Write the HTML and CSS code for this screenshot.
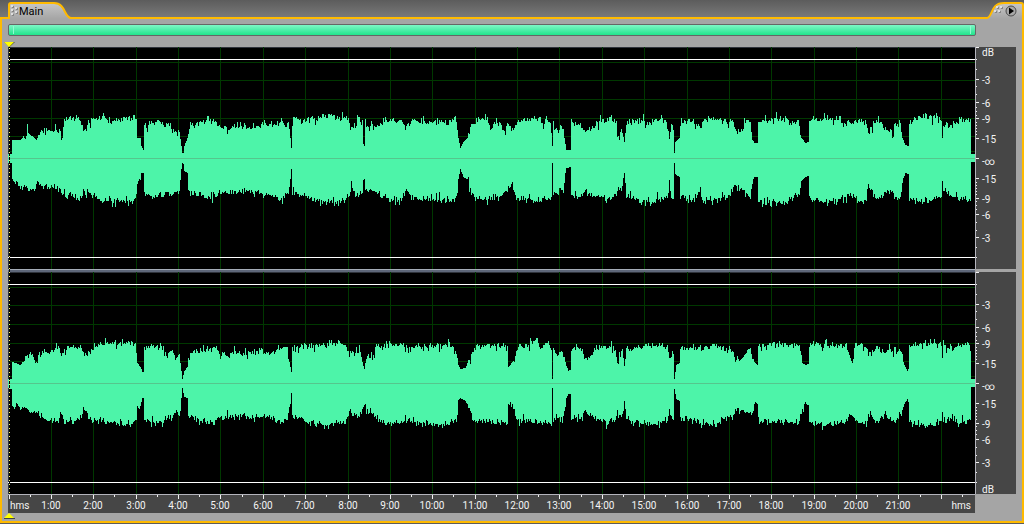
FILE: index.html
```
<!DOCTYPE html>
<html lang="en">
<head>
    <meta charset="UTF-8">
    <meta name="viewport" content="width=device-width, initial-scale=1.0">
    <title>Main</title>
    <link rel="stylesheet" href="styles.css">
</head>
<body>
    <header class="tab-bar">
        <button class="tab" type="button">
            <svg class="tab-shape" width="74" height="19" viewBox="0 0 74 19" aria-hidden="true">
                <defs>
                    <linearGradient id="tabFill" x1="0" y1="0" x2="0" y2="1">
                        <stop offset="0" stop-color="#c6c6c6"/>
                        <stop offset="1" stop-color="#a5a5a5"/>
                    </linearGradient>
                </defs>
                <path d="M0 19V18H9V5Q9 3 11 3H54C66 3 64 18 71 18H74V19Z" fill="url(#tabFill)"/>
                <path d="M0 18H9V5Q9 3 11 3H54C66 3 64 18 71 18H74" fill="none" stroke="#ffba00" stroke-width="2"/>
                <g fill="#858585">
                    <path d="M12 6h2v2h-2zM12 10h2v2h-2zM12 14h2v2h-2zM16 8h2v2h-2zM16 12h2v2h-2z"/>
                </g>
                <g fill="#dedede">
                    <path d="M11 5h2v2h-2zM11 9h2v2h-2zM11 13h2v2h-2zM15 7h2v2h-2zM15 11h2v2h-2z"/>
                </g>
            </svg>
            <span class="tab-label">Main</span>
        </button>
        <div class="tab-line"></div>
        <button class="panel-menu" type="button" aria-label="Panel menu">
            <svg width="40" height="19" viewBox="0 0 40 19">
                <path d="M0 19V18H3C9 17 6 3 20 3H37Q39 3 39 5V19Z" fill="url(#tabFill)"/>
                <path d="M0 18H3C9 17 6 3 20 3H37Q39 3 39 5V19" fill="none" stroke="#ffba00" stroke-width="2"/>
                <path d="M11 11h2v2h-2zM15 11h2v2h-2zM13 7h2v2h-2zM17 7h2v2h-2z" fill="#858585"/>
                <path d="M10 10h2v2h-2zM14 10h2v2h-2zM12 6h2v2h-2zM16 6h2v2h-2z" fill="#dedede"/>
                <circle cx="27" cy="11" r="5" fill="#a8a8a8" stroke="#4c4c4c"/>
                <path d="M25 7.500L30 11L25 14.500Z" fill="#000"/>
            </svg>
        </button>
    </header>

    <main class="panel">
        <div class="overview"><div class="overview-range"></div></div>

        <div class="editor">
            <div class="lane"><svg id="left"></svg></div>
            <div class="ruler db-ruler"><svg id="leftDb"></svg></div>
            <div class="splitter"></div>
            <div class="splitter-end"></div>
            <div class="lane"><svg id="right"></svg></div>
            <div class="ruler db-ruler"><svg id="rightDb"></svg></div>
            <div class="ruler time-ruler"><svg id="time"></svg></div>
            <div class="playhead">
                <svg class="marker marker-top" width="11" height="5" viewBox="0 0 11 5"><path d="M0 0H11L5.500 5Z" fill="#444"/><path d="M0 0H10L5 5Z" fill="#ff0"/></svg>
                <svg class="marker marker-bottom" width="11" height="6" viewBox="0 0 11 6"><path d="M0 5H11V6H0Z" fill="#444"/><path d="M5 0L10 5H0Z" fill="#ff0"/></svg>
            </div>
        </div>
    </main>

    <script>
        const START = 8, WIDTH = 967, HEIGHT = 222, MID = 111;
        const MINUTE = 42.38;

        // Envelope points: x, level above the centre line, level below it
        const leftEnvelope = `
            9,4,4 11,4,4 12,18,22 20,18,27 26,25,28 27,31,30 28,25,30 36,18,27 40,27,26 50,27,28 60,28,30 62,20,34
            64,36,37 70,41,37 79,40,41 84,27,32 88,36,33 95,38,38 103,42,42 110,36,42 120,39,42 134,41,41
            136,38,39 137,20,23 140,20,24 141,12,14 143,8,14 144,34,35 150,34,37 158,38,37 164,32,36
            168,36,34 172,28,34 179,26,32 181,12,10 182,5,4 183,5,5 184,12,12 187,20,14 188,26,30 190,32,33
            198,35,36 212,38,37 222,30,34 238,32,33 250,30,32 262,34,35 272,32,35 280,37,40 288,35,34
            290,20,20 291,10,10 292,34,34 294,40,35 302,37,36 310,41,38 316,37,42 320,42,42 336,41,44
            348,40,40 351,29,28 356,32,36 357,44,36 358,40,36 362,36,34 363,14,22 364,12,20 365,34,33
            372,30,31 380,33,38 385,38,40 396,37,41 402,37,41 406,30,32 410,36,38 425,36,40 438,35,40
            450,36,42 455,40,40 457,28,34 458,20,20 460,10,10 463,16,18 467,20,20 470,30,31 474,37,37
            485,40,42 490,31,38 500,35,37 503,26,34 508,35,29 512,26,25 515,34,37 522,38,40 533,40,42
            540,38,41 543,31,40 546,40,39 550,38,38 551,25,36 552,12,4 553,33,36 557,26,34 560,32,31
            563,26,30 565,14,14 566,8,9 570,8,8 571,36,36 580,33,37 585,26,31 590,30,36 600,36,38
            610,40,41 616,35,37 617,21,30 621,30,30 624,16,14 626,34,35 635,37,40 650,36,42 664,40,40
            668,28,36 669,22,27 671,34,36 673,28,45 674,5,4 675,16,15 679,20,18 680,36,38 690,38,41
            700,32,32 702,35,40 712,40,42 725,37,38 732,38,33 735,27,26 743,28,32 744,38,34 750,36,37
            752,18,22 754,15,18 757,15,18 758,37,42 770,38,44 785,40,43 791,34,40 798,36,37 800,28,28
            801,20,22 805,15,18 808,16,17 809,38,41 820,38,43 830,40,43 840,40,40 843,32,39 850,36,35
            858,38,41 866,35,42 868,27,23 870,28,30 875,37,38 880,38,37 884,30,34 890,27,32 893,22,33
            894,34,40 900,34,38 902,20,22 905,13,14 908,12,15 909,37,41 920,40,42 930,41,43 941,38,38
            942,20,23 943,33,34 954,33,37 960,39,42 970,37,39 971,4,3 975,4,3`;
        const rightEnvelope = `
            9,4,4 11,4,5 12,21,23 20,18,22 26,26,24 30,30,28 37,20,29 38,29,30 48,32,35 58,34,37 61,29,27
            63,29,37 65,34,38 80,36,36 84,28,26 88,30,34 95,35,36 103,39,37 112,40,38 128,39,41 135,38,38
            137,20,24 140,16,22 142,11,14 143,11,14 144,34,37 155,37,39 163,34,36 164,25,35 172,33,33
            175,24,27 179,27,33 181,12,14 182,4,4 184,12,13 187,16,14 188,26,33 193,31,34 205,33,37
            213,36,38 220,29,33 230,31,33 245,29,33 260,33,32 270,29,34 280,36,38 287,36,36 288,25,32
            290,16,20 291,11,9 292,34,33 300,37,35 315,37,40 330,40,41 345,38,38 349,29,28 360,30,32
            363,17,24 364,14,22 366,26,28 374,29,31 376,36,36 390,39,40 404,37,38 405,26,34 406,36,37
            425,36,40 452,38,38 456,32,38 458,18,16 460,14,14 465,15,17 468,22,22 472,28,33 475,37,36
            490,37,39 507,37,38 508,16,20 514,23,26 517,35,36 527,37,37 536,43,38 541,34,39 545,40,39
            551,34,39 552,4,4 553,37,39 556,28,33 560,33,36 564,27,30 566,17,14 568,12,10 570,13,10
            571,30,34 575,36,35 582,34,33 584,26,29 591,26,30 594,34,34 605,37,38 615,34,36 617,20,28
            622,32,33 624,17,17 626,33,35 640,37,41 655,38,40 667,36,37 669,24,27 673,34,36 674,4,5
            676,18,15 679,20,17 680,34,36 690,37,35 700,34,38 715,38,41 725,33,33 733,30,31 735,23,26
            743,25,26 750,36,28 752,24,30 755,20,18 757,18,20 758,37,38 770,39,38 790,38,39 799,38,38
            802,20,24 805,18,18 808,19,23 809,39,38 825,38,41 845,38,37 852,20,28 855,40,37 865,36,38
            870,28,29 876,38,40 884,30,32 895,34,38 901,30,32 904,18,20 907,12,15 908,14,18 909,37,38
            925,39,42 941,38,38 942,22,22 943,38,38 952,32,33 958,39,40 970,38,36 971,4,3 975,4,3`;

        function parse(text) {
            return text.trim().split(/\s+/).map(p => p.split(',').map(Number));
        }

        function noise(n) {
            const v = Math.sin(n * 127.1) * 43758.5453;
            return v - Math.floor(v);
        }

        function jitter(level, seed) {
            if (level < 22) return Math.round(level);
            const r = noise(seed) + noise(seed + 0.61) - 1;
            const odd = noise(seed + 0.37);
            const peak = odd > 0.93 ? 4 : odd < 0.06 ? -4 : 0;
            return Math.round(level + r * 4 + peak);
        }

        function wavePath(points, seed) {
            let top = '', bottom = '', i = 0;
            for (let x = START; x < START + WIDTH; x++) {
                while (i < points.length - 2 && points[i + 1][0] <= x) i++;
                const a = points[i], b = points[i + 1];
                const t = Math.max(0, Math.min(1, (x - a[0]) / (b[0] - a[0])));
                const up = jitter(a[1] + (b[1] - a[1]) * t, x + seed);
                const down = jitter(a[2] + (b[2] - a[2]) * t, x + seed + 5000);
                top += `V${MID - up}H${x + 1}`;
                bottom = `V${MID + 1 + down}H${x}` + bottom;
            }
            return `M${START} ${MID}${top}${bottom}Z`;
        }

        const pctX = x => (x - START) / WIDTH * 100 + '%';
        const pctY = y => y / HEIGHT * 100 + '%';

        function drawLane(id, envelope, seed) {
            let out = '';
            for (const y of [15, 33, 52, 71, 89, 104]) {
                out += `<rect class="grid" x="0" y="${pctY(y)}" width="100%" height="1"/>`;
            }
            for (let m = 1; m <= 22; m++) {
                out += `<rect class="grid" x="${pctX(Math.floor(9 + m * MINUTE))}" y="0" width="1" height="100%"/>`;
            }
            for (const y of [12, 210]) {
                out += `<rect class="limit" x="0" y="${pctY(y)}" width="100%" height="1"/>`;
            }
            out += `<svg viewBox="${START} 0 ${WIDTH} ${HEIGHT}" preserveAspectRatio="none" width="100%" height="100%">
                <path class="wave" d="${wavePath(parse(envelope), seed)}"/></svg>`;
            out += `<rect class="center" x="0" y="${pctY(MID)}" width="100%" height="1"/>`;
            document.getElementById(id).innerHTML = out;
        }

        function drawDb(id, labels) {
            let out = '';
            for (const d of [0, 20, 40, 56, 79]) {
                for (const y of [MID - d, MID + d]) {
                    out += `<rect class="tick" x="0" y="${pctY(y)}" width="3" height="1"/>`;
                }
            }
            for (const d of [24, 27, 30, 33, 36, 43, 47, 51, 64, 72, 89, 99]) {
                for (const y of [MID - d, MID + d]) {
                    out += `<rect class="tick" x="0" y="${pctY(y)}" width="1" height="1"/>`;
                }
            }
            out += '<rect class="tick" x="0" y="0" width="3" height="1"/>';
            for (const [y, text] of labels) {
                out += `<text x="6" y="${pctY(y)}" dy="4">${text}</text>`;
            }
            document.getElementById(id).innerHTML = out;
        }

        function drawTime() {
            let out = '';
            for (let h = 0; h <= 45; h++) {
                const x = Math.floor(9 + h * MINUTE / 2);
                out += `<rect class="tick" x="${pctX(x)}" y="0" width="1" height="${h % 2 ? 2 : 4}"/>`;
            }
            for (let m = 1; m <= 21; m++) {
                out += `<text x="${pctX(Math.floor(9 + m * MINUTE))}" y="14" text-anchor="middle">${m}:00</text>`;
            }
            out += '<text x="2" y="14">hms</text>';
            out += `<text x="${pctX(971)}" y="14" text-anchor="end">hms</text>`;
            document.getElementById('time').innerHTML = out;
        }

        const scale = [[33, '-3'], [56, '-6'], [72, '-9'], [92, '-15'], [114, '-∞'],
                       [132, '-15'], [152, '-9'], [168, '-6'], [191, '-3']];
        drawLane('left', leftEnvelope, 11);
        drawLane('right', rightEnvelope, 977);
        drawDb('leftDb', [[5, 'dB'], ...scale]);
        drawDb('rightDb', [...scale, [217, 'dB']]);
        drawTime();
    </script>
</body>
</html>
```
FILE: styles.css
```
* {
    box-sizing: border-box;
}
body {
    margin: 0;
    height: 100vh;
    min-height: 300px;
    display: flex;
    flex-direction: column;
    padding-bottom: 1px;
    background: #5c5c5c;
    font-family: Roboto, "Liberation Sans", sans-serif;
    overflow: hidden;
}
button {
    padding: 0;
    border: none;
    background: none;
    font: inherit;
    cursor: pointer;
}
svg {
    display: block;
}

/* Tab strip */
.tab-bar {
    display: flex;
    height: 19px;
    background: linear-gradient(#5c5c5c, #7c7c7c);
}
.tab {
    display: grid;
    align-items: center;
}
.tab-shape, .tab-label {
    grid-area: 1 / 1;
}
.tab-label {
    padding: 4px 0 0 19px;
    font-size: 11px;
    line-height: 14px;
    text-align: left;
    color: #000;
}
.tab-line {
    flex: 1;
    border-bottom: 2px solid #ffba00;
}

/* Panel */
.panel {
    flex: 1;
    display: flex;
    flex-direction: column;
    padding: 5px 6px 8px;
    border: 2px solid #ffba00;
    border-top: none;
    background: #a5a5a5;
}
.overview {
    height: 12px;
    margin: 0 40px 11px 0;
    padding: 1px 4px;
    border: 1px solid #666;
    border-radius: 2px;
    background: linear-gradient(#7df7c6, #22e48c);
}
.overview-range {
    height: 8px;
    border: solid #8ffbd0;
    border-width: 0 1px;
}

/* Waveform lanes and rulers */
.editor {
    position: relative;
    flex: 1;
    display: grid;
    grid-template-columns: 1fr 41px;
    grid-template-rows: 1fr 3px 1fr 19px;
}
.editor > div > svg {
    width: 100%;
    height: 100%;
}
.lane {
    min-height: 0;
    background: #000;
    box-shadow: inset 1px 1px #30343c;
}
.ruler {
    min-height: 0;
    background: #464646;
    font-size: 10px;
}
.db-ruler {
    border-left: 1px solid #b4b4bc;
}
.time-ruler {
    border-top: 1px solid #b4b4bc;
}
.splitter {
    background: linear-gradient(#a5adb8 1px, #5f687a 1px);
}
.splitter-end {
    background: #a5a5a5;
}
.grid {
    fill: #003800;
}
.limit {
    fill: #fff;
}
.wave {
    fill: #4df4a9;
}
.center {
    fill: #55c68d;
}
.grid, .limit, .wave, .center, .tick {
    shape-rendering: crispEdges;
}
.tick {
    fill: #f0f0f0;
}
.ruler text {
    fill: #f4f4f4;
}

/* Cursor drawn over both lanes */
.playhead {
    position: absolute;
    top: 0;
    bottom: 19px;
    left: 1px;
    width: 1px;
    background: repeating-linear-gradient(#000 0 1px, #ff6 1px 2px, #000 2px 4px);
}
.editor > .playhead > .marker {
    position: absolute;
    left: -5px;
    width: 11px;
}
.editor > .playhead > .marker-top {
    top: -5px;
    height: 5px;
}
.editor > .playhead > .marker-bottom {
    bottom: -25px;
    height: 6px;
}
```
